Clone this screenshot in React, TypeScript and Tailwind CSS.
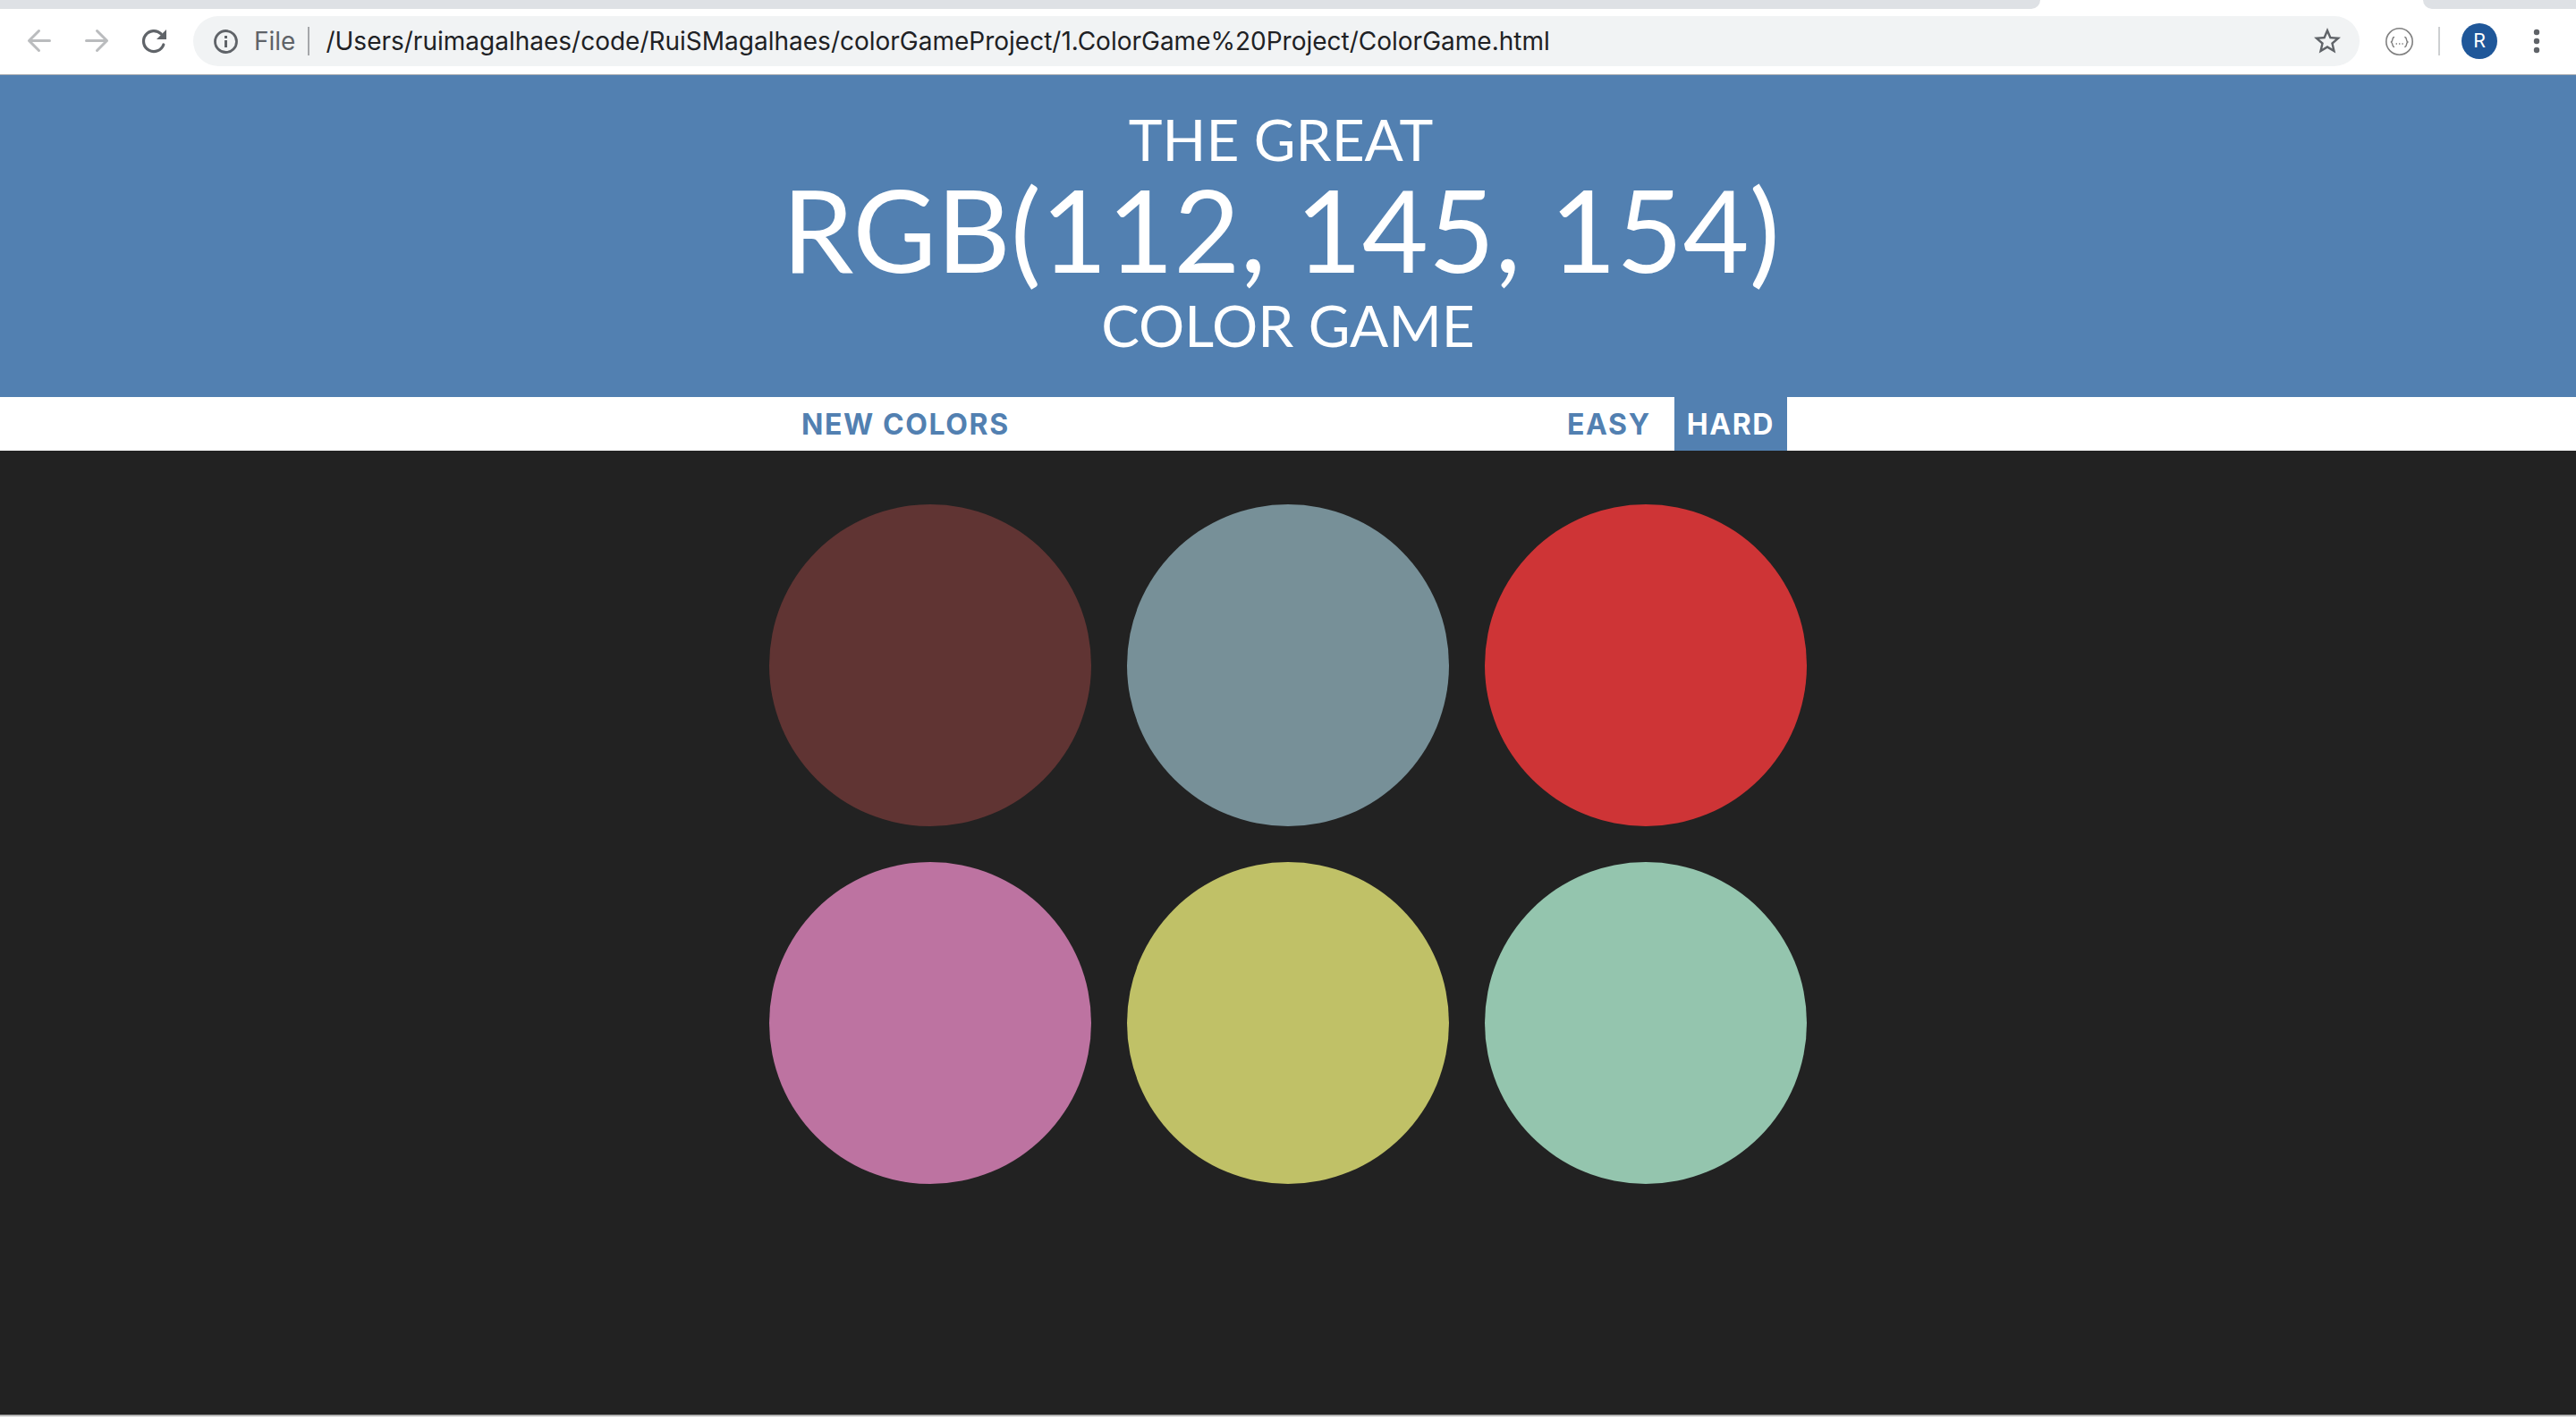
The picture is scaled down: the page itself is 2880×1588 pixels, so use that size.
import { useState } from "react";
import type { ReactNode } from "react";

const colors = ["bg-[#603433]", "bg-[#779098]", "bg-[#ce3436]", "bg-[#bd73a1]", "bg-[#c0c167]", "bg-[#94c5ae]"];

function IconButton({ label, className, children }: { label: string; className: string; children: ReactNode }) {
  return (
    <button type="button" aria-label={label} className={`flex shrink-0 items-center justify-center ${className}`}>
      {children}
    </button>
  );
}

function TabStrip() {
  return (
    <div className="flex h-[10px] bg-white">
      <div className="grow rounded-br-[14px] bg-[#dee1e5]" />
      <div className="w-[428px]" />
      <div className="w-[171px] rounded-bl-[14px] bg-[#dee1e5]" />
    </div>
  );
}

function Toolbar() {
  return (
    <div className="flex h-[74px] items-center border-b border-[#a9adb1] bg-white px-7 pb-px">
      <IconButton label="Back" className="h-8 w-8">
        <svg viewBox="0 0 32 32" className="h-8 w-8" fill="none" stroke="#babcbe" strokeWidth="3" strokeLinecap="round" strokeLinejoin="round">
          <path d="M27.5 15.500H4.500M15.500 4.500L4.500 15.500L15.500 26.500" />
        </svg>
      </IconButton>
      <IconButton label="Forward" className="ml-8 h-8 w-8">
        <svg viewBox="0 0 32 32" className="h-8 w-8" fill="none" stroke="#babcbe" strokeWidth="3" strokeLinecap="round" strokeLinejoin="round">
          <path d="M4.500 15.500H27.500M16.500 4.500L27.500 15.500L16.500 26.500" />
        </svg>
      </IconButton>
      <IconButton label="Reload" className="ml-8 h-8 w-8">
        <svg viewBox="0 0 32 32" className="h-8 w-8">
          <path d="M26.800 20A11.500 11.500 0 1 1 24.100 7.900" fill="none" stroke="#606469" strokeWidth="3.200" strokeLinecap="round" />
          <path d="M30 3V14H19Z" fill="#606469" />
        </svg>
      </IconButton>
      <div className="ml-7 flex h-14 grow items-center rounded-full bg-[#f1f3f4] pr-[18px] pl-[22px]">
        <IconButton label="View site information" className="h-7 w-7">
          <svg viewBox="0 0 28 28" className="h-7 w-7">
            <circle cx="14.500" cy="14.500" r="12" fill="none" stroke="#5f6368" strokeWidth="2.800" />
            <path d="M13 8h3v3h-3zM13 13h3v8h-3z" fill="#5f6368" />
          </svg>
        </IconButton>
        <span className="ml-[18px] text-[28px] leading-8 text-[#5f6368]">File</span>
        <div className="ml-[14px] h-8 w-[2px] bg-[#a5a7aa]" />
        <input
          aria-label="Address"
          className="ml-[18px] min-w-0 grow bg-transparent text-[28px] leading-8 text-[#202124] outline-none"
          defaultValue="/Users/ruimagalhaes/code/RuiSMagalhaes/colorGameProject/1.ColorGame%20Project/ColorGame.html"
        />
        <IconButton label="Bookmark this page" className="h-9 w-9">
          <svg viewBox="0 0 24 24" className="h-9 w-9" fill="#5f6368">
            <path d="M22 9.240l-7.190-.62L12 2 9.190 8.630 2 9.240l5.460 4.730L5.820 21 12 17.270 18.180 21l-1.630-7.030L22 9.240zM12 15.400l-3.760 2.270 1-4.280-3.320-2.880 4.380-.38L12 6.100l1.710 4.040 4.380.38-3.320 2.880 1 4.280L12 15.400z" />
          </svg>
        </IconButton>
      </div>
      <IconButton label="JSON formatter" className="ml-7 h-8 w-8">
        <svg viewBox="0 0 32 32" className="h-8 w-8" fill="none" stroke="#808080">
          <circle cx="16.500" cy="16.500" r="14.700" strokeWidth="1.600" />
          <path d="M11 11.500C7.500 11.500 10 17 6.800 17C10 17 7.500 22.500 11 22.500M22.300 11.500C25.800 11.500 23.300 17 26.500 17C23.300 17 25.800 22.500 22.300 22.500" strokeWidth="1.400" />
          <path d="M12.600 19h1.400M16 19h1.400M19.400 19h1.400" strokeWidth="1.400" />
        </svg>
      </IconButton>
      <div className="ml-7 h-8 w-[2px] bg-[#cdcfd1]" />
      <button type="button" aria-label="Profile" className="ml-6 flex h-10 w-10 shrink-0 items-center justify-center rounded-full bg-[#1f5799] font-[Roboto] text-[22px] leading-6 text-white">
        R
      </button>
      <IconButton label="More" className="ml-7 h-8 w-8">
        <svg viewBox="0 0 32 32" className="h-8 w-8" fill="#5f6368">
          <circle cx="16" cy="6" r="3.200" />
          <circle cx="16" cy="16" r="3.200" />
          <circle cx="16" cy="26" r="3.200" />
        </svg>
      </IconButton>
    </div>
  );
}

function ModeButton({ label, selected, onClick }: { label: string; selected: boolean; onClick: () => void }) {
  return (
    <button
      type="button"
      aria-pressed={selected}
      onClick={onClick}
      className={`h-full px-[14px] pt-[2px] tracking-wider ${selected ? "bg-[#5280b1] text-white" : "text-[#5280b1]"}`}
    >
      {label}
    </button>
  );
}

export default function App() {
  const [mode, setMode] = useState("HARD");
  return (
    <div className="flex min-h-screen flex-col bg-white font-[Inter,'Liberation_Sans',sans-serif]">
      <TabStrip />
      <Toolbar />
      <main className="flex grow flex-col border-b-2 border-[#b3b3b3] bg-[#222222]">
        <h1 className="flex flex-col items-center bg-[#5280b1] pt-8 pb-10 text-center font-[Lato,sans-serif] text-[64px] leading-[80px] text-white">
          <span className="pr-4">THE GREAT</span>
          <span className="mb-2 pr-4 text-[128px] leading-[120px]">RGB(112, 145, 154)</span>
          <span>COLOR GAME</span>
        </h1>
        <nav aria-label="Game controls" className="flex h-[60px] justify-center bg-white text-[32px] leading-10 font-bold">
          <div className="flex w-[1116px] justify-between">
            <button type="button" className="h-full px-[14px] pt-[2px] tracking-wider text-[#5280b1]">NEW COLORS</button>
            <div className="flex gap-3">
              <ModeButton label="EASY" selected={mode === "EASY"} onClick={() => setMode("EASY")} />
              <ModeButton label="HARD" selected={mode === "HARD"} onClick={() => setMode("HARD")} />
            </div>
          </div>
        </nav>
        <div className="mx-auto mt-[60px] grid grid-cols-3 gap-10">
          {colors.map((color, i) => (
            <button key={color} type="button" aria-label={`Color ${i + 1}`} className={`size-[360px] rounded-full ${color}`} />
          ))}
        </div>
      </main>
      <div className="h-1 bg-white" />
    </div>
  );
}
